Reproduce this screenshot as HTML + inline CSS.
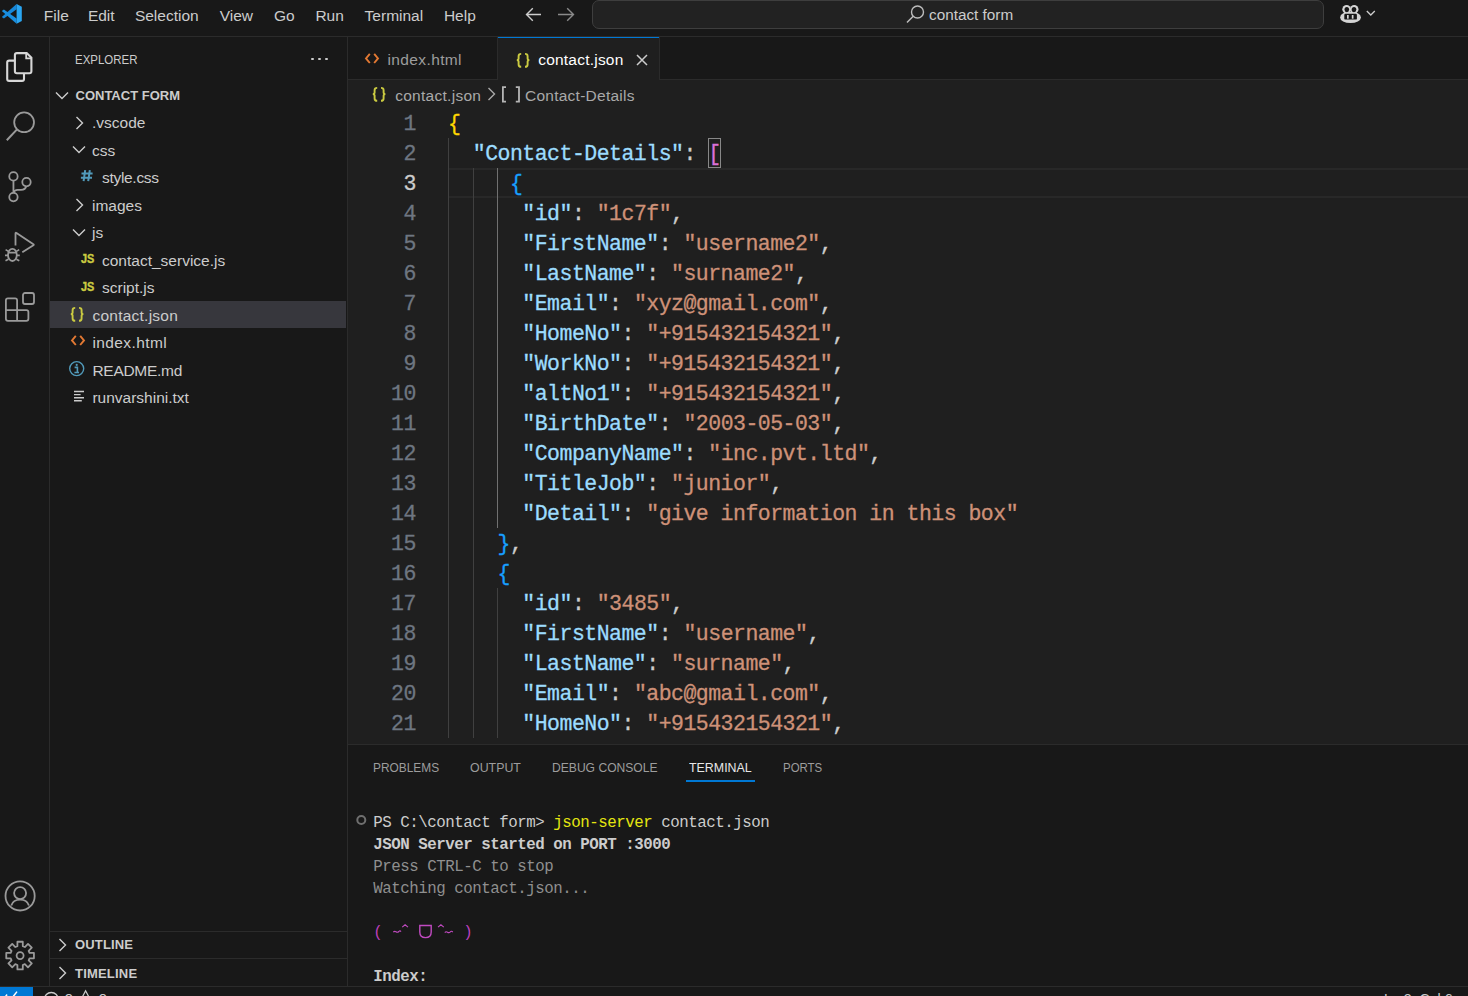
<!DOCTYPE html>
<html><head><meta charset="utf-8"><style>
*{margin:0;padding:0;box-sizing:border-box}
html,body{width:1468px;height:996px;overflow:hidden;background:#181818;font-family:"Liberation Sans",sans-serif;color:#cccccc}
.a{position:absolute}
.t{position:absolute;font-family:"Liberation Sans",sans-serif;white-space:pre;line-height:1}
.m{position:absolute;font-family:"Liberation Mono",monospace;white-space:pre;line-height:1;-webkit-text-stroke-width:0.3px}
svg{position:absolute;overflow:visible}
</style></head><body>
<div class="a" style="left:0px;top:0px;width:1468px;height:36px;background:#181818;"></div>
<div class="a" style="left:0px;top:36px;width:1468px;height:1px;background:#2b2b2b;"></div>
<div class="a" style="left:49px;top:37px;width:1px;height:950px;background:#2b2b2b;"></div>
<div class="a" style="left:347px;top:37px;width:1px;height:950px;background:#2b2b2b;"></div>
<div class="a" style="left:348px;top:37px;width:1120px;height:42px;background:#181818;"></div>
<div class="a" style="left:348px;top:79px;width:1120px;height:1px;background:#2b2b2b;"></div>
<div class="a" style="left:348px;top:80px;width:1120px;height:664px;background:#1f1f1f;"></div>
<div class="a" style="left:348px;top:744px;width:1120px;height:1px;background:#2b2b2b;"></div>
<div class="a" style="left:0px;top:986px;width:1468px;height:1px;background:#2b2b2b;"></div>
<div class="a" style="left:0px;top:987px;width:33px;height:9px;background:#0078d4;"></div>
<svg style="left:0px;top:0px;" width="28" height="28" viewBox="0 0 28 28"><path d="M16.6 4.1 L16.6 9.3 L3.9 18.6 L1.8 16.9 Z" fill="#1687d9"/><path d="M1.8 11.1 L3.9 9.4 L16.6 18.4 L16.6 23.8 Z" fill="#1a8fe0"/><path d="M16.6 4.1 L21.8 6.75 L21.8 20.9 L16.6 23.8 Z" fill="#2aa6f2"/></svg>
<div class="t" style="left:43.80px;top:7.88px;font-size:15.5px;color:#cccccc;">File</div>
<div class="t" style="left:87.90px;top:7.88px;font-size:15.5px;color:#cccccc;">Edit</div>
<div class="t" style="left:134.90px;top:7.88px;font-size:15.5px;color:#cccccc;">Selection</div>
<div class="t" style="left:219.70px;top:7.88px;font-size:15.5px;color:#cccccc;">View</div>
<div class="t" style="left:273.90px;top:7.88px;font-size:15.5px;color:#cccccc;">Go</div>
<div class="t" style="left:315.40px;top:7.88px;font-size:15.5px;color:#cccccc;">Run</div>
<div class="t" style="left:364.60px;top:7.88px;font-size:15.5px;color:#cccccc;">Terminal</div>
<div class="t" style="left:443.90px;top:7.88px;font-size:15.5px;color:#cccccc;">Help</div>
<svg style="left:525px;top:7px;" width="18" height="15" viewBox="0 0 18 15"><path d="M1.5 7.5 H16 M7.8 1.2 L1.5 7.5 L7.8 13.8" stroke="#cccccc" stroke-width="1.4" fill="none"/></svg>
<svg style="left:557px;top:7px;" width="18" height="15" viewBox="0 0 18 15"><path d="M1 7.5 H16.5 M10.2 1.2 L16.5 7.5 L10.2 13.8" stroke="#8a8a8a" stroke-width="1.4" fill="none"/></svg>
<div class="a" style="left:592px;top:0px;width:732px;height:29px;background:#222222;border:1px solid #3e3e3e;border-radius:7px;"></div>
<svg style="left:906px;top:5px;" width="19" height="19" viewBox="0 0 19 19"><circle cx="11.5" cy="7" r="6" stroke="#bdbdbd" stroke-width="1.4" fill="none"/><path d="M7.2 11.3 L1 17.5" stroke="#bdbdbd" stroke-width="1.5"/></svg>
<div class="t" style="left:929.00px;top:7.05px;font-size:15.3px;color:#cccccc;">contact form</div>
<svg style="left:1335px;top:0px;" width="30" height="28" viewBox="0 0 30 28"><circle cx="11.6" cy="9.3" r="4.3" fill="#d4d4d4"/><circle cx="19.2" cy="9.3" r="4.3" fill="#d4d4d4"/><ellipse cx="15.5" cy="17.4" rx="10.4" ry="5.7" fill="#d4d4d4"/><ellipse cx="11.8" cy="9.6" rx="2.3" ry="2.6" fill="#181818"/><ellipse cx="19.0" cy="9.6" rx="2.3" ry="2.6" fill="#181818"/><rect x="9.3" y="13.8" width="12.6" height="5.8" rx="1.2" fill="#181818"/><rect x="12" y="15" width="1.7" height="3.7" fill="#d4d4d4"/><rect x="16.8" y="15" width="1.7" height="3.7" fill="#d4d4d4"/></svg>
<svg style="left:1366px;top:10px;" width="10" height="7" viewBox="0 0 10 7"><path d="M0.8 1 L4.8 5 L8.8 1" stroke="#cccccc" stroke-width="1.3" fill="none"/></svg>
<svg style="left:0px;top:45px;" width="40" height="45" viewBox="0 0 40 45"><path d="M16.9 8.1 H26.7 L31.4 12.8 V26.2 Q31.4 28.2 29.4 28.2 H16.9 Q14.9 28.2 14.9 26.2 V10.1 Q14.9 8.1 16.9 8.1 Z" stroke="#d7d7d7" stroke-width="2.1" fill="none"/><path d="M26.2 8.6 V13.3 H31" stroke="#d7d7d7" stroke-width="1.8" fill="none"/><path d="M14.9 15.6 H9.2 Q7.2 15.6 7.2 17.6 V33.9 Q7.2 35.9 9.2 35.9 H22 Q24 35.9 24 33.9 V28.2" stroke="#d7d7d7" stroke-width="2.1" fill="none"/></svg>
<svg style="left:0px;top:105px;" width="40" height="40" viewBox="0 0 40 40"><circle cx="24.1" cy="17.3" r="9.9" stroke="#9a9a9a" stroke-width="1.8" fill="none"/><path d="M17 24.4 L6.8 35.2" stroke="#9a9a9a" stroke-width="2"/></svg>
<svg style="left:0px;top:165px;" width="40" height="40" viewBox="0 0 40 40"><circle cx="13.45" cy="11.4" r="4.2" stroke="#9a9a9a" stroke-width="1.8" fill="none"/><circle cx="13.45" cy="32.1" r="4.2" stroke="#9a9a9a" stroke-width="1.8" fill="none"/><circle cx="26.5" cy="17.1" r="4.2" stroke="#9a9a9a" stroke-width="1.8" fill="none"/><path d="M13.45 15.6 V27.9 M26.2 21.3 Q25.5 24.8 21 24.9 H17.5 Q14.5 25 13.6 27.6" stroke="#9a9a9a" stroke-width="1.8" fill="none"/></svg>
<svg style="left:0px;top:225px;" width="40" height="40" viewBox="0 0 40 40"><path d="M15.5 20.5 V8.4 Q15.5 7.3 16.5 7.9 L33.4 19.2 Q34.2 19.7 33.4 20.2 L22.3 27.3" stroke="#9a9a9a" stroke-width="1.8" fill="none" stroke-linejoin="round"/><ellipse cx="12.4" cy="29.9" rx="4.4" ry="6.1" stroke="#9a9a9a" stroke-width="1.8" fill="none"/><path d="M8.2 27.6 H16.6 M5.6 24.6 L8.4 26.4 M5.0 30.4 H8 M5.5 35.8 L8.4 34.2 M19.2 24.6 L16.4 26.4 M19.8 30.4 H16.8 M19.3 35.8 L16.4 34.2" stroke="#9a9a9a" stroke-width="1.6"/></svg>
<svg style="left:0px;top:285px;" width="40" height="40" viewBox="0 0 40 40"><path d="M7.9 13.3 H15.1 Q17.1 13.3 17.1 15.3 V25.1 H26.4 Q28.4 25.1 28.4 27.1 V33.8 Q28.4 35.8 26.4 35.8 H7.9 Q5.9 35.8 5.9 33.8 V15.3 Q5.9 13.3 7.9 13.3 Z M5.9 25.1 H17.1 V35.8" stroke="#9a9a9a" stroke-width="1.8" fill="none" stroke-linejoin="round"/><rect x="23" y="8" width="11" height="11" rx="2" stroke="#9a9a9a" stroke-width="1.8" fill="none"/></svg>
<svg style="left:0px;top:875px;" width="40" height="40" viewBox="0 0 40 40"><circle cx="20.1" cy="20.9" r="14.6" stroke="#9a9a9a" stroke-width="1.8" fill="none"/><circle cx="20.1" cy="18.1" r="6" stroke="#9a9a9a" stroke-width="1.8" fill="none"/><path d="M11.3 30.5 Q13 24.6 20.1 24.6 Q27.2 24.6 28.9 30.5" stroke="#9a9a9a" stroke-width="1.8" fill="none"/></svg>
<svg style="left:0px;top:935px;" width="40" height="40" viewBox="0 0 40 40"><path d="M17.41 6.76 L22.79 6.76 L22.80 11.18 L24.85 12.03 L27.98 8.91 L31.79 12.72 L28.67 15.85 L29.52 17.90 L33.94 17.91 L33.94 23.29 L29.52 23.30 L28.67 25.35 L31.79 28.48 L27.98 32.29 L24.85 29.17 L22.80 30.02 L22.79 34.44 L17.41 34.44 L17.40 30.02 L15.35 29.17 L12.22 32.29 L8.41 28.48 L11.53 25.35 L10.68 23.30 L6.26 23.29 L6.26 17.91 L10.68 17.90 L11.53 15.85 L8.41 12.72 L12.22 8.91 L15.35 12.03 L17.40 11.18 Z" stroke="#9a9a9a" stroke-width="1.8" fill="none" stroke-linejoin="round"/><circle cx="20.1" cy="20.6" r="3.5" stroke="#9a9a9a" stroke-width="1.8" fill="none"/></svg>
<div class="t" style="left:74.50px;top:52.94px;font-size:13.3px;color:#cccccc;transform:scaleX(0.862);transform-origin:0 0;">EXPLORER</div>
<div class="a" style="left:311.3px;top:57.8px;width:2.4px;height:2.4px;background:#cccccc;border-radius:50%;"></div>
<div class="a" style="left:318.3px;top:57.8px;width:2.4px;height:2.4px;background:#cccccc;border-radius:50%;"></div>
<div class="a" style="left:325.3px;top:57.8px;width:2.4px;height:2.4px;background:#cccccc;border-radius:50%;"></div>
<svg style="left:55px;top:90.5px;" width="14" height="9" viewBox="0 0 14 9"><path d="M1 1.5 L7 7.5 L13 1.5" stroke="#cccccc" stroke-width="1.4" fill="none"/></svg>
<div class="t" style="left:75.50px;top:88.79px;font-size:13px;color:#cccccc;font-weight:bold;">CONTACT FORM</div>
<div class="a" style="left:50px;top:301px;width:296px;height:27px;background:#37373d;"></div>
<svg style="left:75px;top:115.5px;" width="9" height="14" viewBox="0 0 9 14"><path d="M1.5 1 L7.5 7 L1.5 13" stroke="#cccccc" stroke-width="1.4" fill="none"/></svg>
<div class="t" style="left:92.00px;top:115.08px;font-size:15.5px;color:#cccccc;">.vscode</div>
<svg style="left:71.5px;top:145.0px;" width="14" height="9" viewBox="0 0 14 9"><path d="M1 1.5 L7 7.5 L13 1.5" stroke="#cccccc" stroke-width="1.4" fill="none"/></svg>
<div class="t" style="left:92.00px;top:142.58px;font-size:15.5px;color:#cccccc;">css</div>
<svg style="left:80px;top:169.0px;" width="14" height="14" viewBox="0 0 14 14"><path d="M5.2 1.2 L3.6 12.2 M9.8 1.2 L8.2 12.2 M1.5 4.6 H12.6 M0.9 8.8 H12" stroke="#519aba" stroke-width="2" fill="none"/></svg>
<div class="t" style="left:102.00px;top:170.08px;font-size:15.5px;color:#cccccc;letter-spacing:-0.3px;">style.css</div>
<svg style="left:75px;top:198.0px;" width="9" height="14" viewBox="0 0 9 14"><path d="M1.5 1 L7.5 7 L1.5 13" stroke="#cccccc" stroke-width="1.4" fill="none"/></svg>
<div class="t" style="left:92.00px;top:197.58px;font-size:15.5px;color:#cccccc;">images</div>
<svg style="left:71.5px;top:227.5px;" width="14" height="9" viewBox="0 0 14 9"><path d="M1 1.5 L7 7.5 L13 1.5" stroke="#cccccc" stroke-width="1.4" fill="none"/></svg>
<div class="t" style="left:92.00px;top:225.08px;font-size:15.5px;color:#cccccc;">js</div>
<div class="t" style="left:80.80px;top:252.39px;font-size:13.6px;color:#cbcb41;font-weight:bold;transform:scaleX(0.8);transform-origin:0 0;-webkit-text-stroke:0.4px #cbcb41;">JS</div>
<div class="t" style="left:102.00px;top:252.58px;font-size:15.5px;color:#cccccc;">contact_service.js</div>
<div class="t" style="left:80.80px;top:279.89px;font-size:13.6px;color:#cbcb41;font-weight:bold;transform:scaleX(0.8);transform-origin:0 0;-webkit-text-stroke:0.4px #cbcb41;">JS</div>
<div class="t" style="left:102.00px;top:280.08px;font-size:15.5px;color:#cccccc;">script.js</div>
<svg style="left:70px;top:307.0px;" width="15" height="15" viewBox="0 0 15 15"><path d="M5.2 0.9 Q2.6 0.9 2.6 3.2 V5.6 Q2.6 7.1 0.8 7.1 Q2.6 7.1 2.6 8.6 V11.4 Q2.6 13.8 5.2 13.8 M9.0 0.9 Q11.6 0.9 11.6 3.2 V5.6 Q11.6 7.1 13.4 7.1 Q11.6 7.1 11.6 8.6 V11.4 Q11.6 13.8 9.0 13.8" stroke="#cbcb41" stroke-width="1.9" fill="none"/></svg>
<div class="t" style="left:92.40px;top:307.58px;font-size:15.5px;color:#cccccc;letter-spacing:0.25px;">contact.json</div>
<svg style="left:70.5px;top:335.0px;" width="14" height="11" viewBox="0 0 14 11"><path d="M4.8 0.8 L1 5.4 L4.8 10 M9.2 0.8 L13 5.4 L9.2 10" stroke="#e37933" stroke-width="1.9" fill="none"/></svg>
<div class="t" style="left:92.40px;top:335.08px;font-size:15.5px;color:#cccccc;letter-spacing:0.4px;">index.html</div>
<svg style="left:68px;top:360.2px;" width="18" height="18" viewBox="0 0 18 18"><circle cx="8.7" cy="8.6" r="7" stroke="#519aba" stroke-width="1.4" fill="none"/><circle cx="8.7" cy="4.9" r="1.1" fill="#519aba"/><path d="M6.6 7.4 H9.4 V12.3 M6.4 12.5 H11" stroke="#519aba" stroke-width="1.6" fill="none"/></svg>
<div class="t" style="left:92.40px;top:362.58px;font-size:15.5px;color:#cccccc;letter-spacing:-0.27px;">README.md</div>
<svg style="left:74px;top:389.5px;" width="12" height="14" viewBox="0 0 12 14"><path d="M0 1.5 H10 M0 4.6 H6.6 M0 7.7 H10 M0 10.8 H7.8" stroke="#cccccc" stroke-width="1.4"/></svg>
<div class="t" style="left:92.40px;top:390.08px;font-size:15.5px;color:#cccccc;">runvarshini.txt</div>
<div class="a" style="left:50px;top:931px;width:297px;height:1px;background:#2b2b2b;"></div>
<div class="a" style="left:50px;top:958px;width:297px;height:1px;background:#2b2b2b;"></div>
<svg style="left:58px;top:938px;" width="9" height="14" viewBox="0 0 9 14"><path d="M1.5 1 L7.5 7 L1.5 13" stroke="#cccccc" stroke-width="1.4" fill="none"/></svg>
<div class="t" style="left:75.00px;top:938.19px;font-size:13px;color:#cccccc;font-weight:bold;letter-spacing:0.15px;">OUTLINE</div>
<svg style="left:58px;top:966px;" width="9" height="14" viewBox="0 0 9 14"><path d="M1.5 1 L7.5 7 L1.5 13" stroke="#cccccc" stroke-width="1.4" fill="none"/></svg>
<div class="t" style="left:75.00px;top:966.59px;font-size:13px;color:#cccccc;font-weight:bold;letter-spacing:0.2px;">TIMELINE</div>
<div class="a" style="left:348px;top:37px;width:150px;height:42px;background:#181818;"></div>
<div class="a" style="left:497px;top:37px;width:1px;height:42px;background:#2b2b2b;"></div>
<div class="a" style="left:498px;top:37px;width:161px;height:43px;background:#1f1f1f;"></div>
<div class="a" style="left:498px;top:37px;width:161px;height:1px;background:#0078d4;"></div>
<div class="a" style="left:659px;top:37px;width:1px;height:42px;background:#2b2b2b;"></div>
<svg style="left:365.3px;top:53.2px;" width="14" height="11" viewBox="0 0 14 11"><path d="M4.8 0.8 L1 5.4 L4.8 10 M9.2 0.8 L13 5.4 L9.2 10" stroke="#e37933" stroke-width="1.9" fill="none"/></svg>
<div class="t" style="left:387.50px;top:51.88px;font-size:15.5px;color:#9d9d9d;letter-spacing:0.38px;">index.html</div>
<svg style="left:515.5px;top:52.5px;" width="15" height="15" viewBox="0 0 15 15"><path d="M5.2 0.9 Q2.6 0.9 2.6 3.2 V5.6 Q2.6 7.1 0.8 7.1 Q2.6 7.1 2.6 8.6 V11.4 Q2.6 13.8 5.2 13.8 M9.0 0.9 Q11.6 0.9 11.6 3.2 V5.6 Q11.6 7.1 13.4 7.1 Q11.6 7.1 11.6 8.6 V11.4 Q11.6 13.8 9.0 13.8" stroke="#cbcb41" stroke-width="1.9" fill="none"/></svg>
<div class="t" style="left:538.20px;top:51.88px;font-size:15.5px;color:#ffffff;letter-spacing:0.22px;">contact.json</div>
<svg style="left:636px;top:54px;" width="12" height="12" viewBox="0 0 12 12"><path d="M1 1 L11 11 M11 1 L1 11" stroke="#cccccc" stroke-width="1.5"/></svg>
<svg style="left:372px;top:86.5px;" width="15" height="15" viewBox="0 0 15 15"><path d="M5.2 0.9 Q2.6 0.9 2.6 3.2 V5.6 Q2.6 7.1 0.8 7.1 Q2.6 7.1 2.6 8.6 V11.4 Q2.6 13.8 5.2 13.8 M9.0 0.9 Q11.6 0.9 11.6 3.2 V5.6 Q11.6 7.1 13.4 7.1 Q11.6 7.1 11.6 8.6 V11.4 Q11.6 13.8 9.0 13.8" stroke="#cbcb41" stroke-width="1.9" fill="none"/></svg>
<div class="t" style="left:395.20px;top:87.88px;font-size:15.5px;color:#a9a9a9;letter-spacing:0.28px;">contact.json</div>
<svg style="left:486.5px;top:87.2px;" width="9" height="14" viewBox="0 0 9 14"><path d="M1.5 1 L7.5 7 L1.5 13" stroke="#a9a9a9" stroke-width="1.4" fill="none"/></svg>
<svg style="left:501px;top:86px;" width="20" height="17" viewBox="0 0 20 17"><path d="M5 1.2 H1.9 V15.6 H5 M14.8 1.2 H18 V15.6 H14.8" stroke="#b5b5b5" stroke-width="1.8" fill="none"/></svg>
<div class="t" style="left:525.00px;top:87.88px;font-size:15.5px;color:#a9a9a9;letter-spacing:0.25px;">Contact-Details</div>
<div class="a" style="left:449px;top:168px;width:1019px;height:30px;background:transparent;border-top:2px solid #282828;border-bottom:2px solid #282828;"></div>
<div class="a" style="left:448px;top:138px;width:1px;height:600px;background:#404040;"></div>
<div class="a" style="left:473px;top:168px;width:1px;height:570px;background:#404040;"></div>
<div class="a" style="left:497px;top:168px;width:1px;height:360px;background:#707070;"></div>
<div class="a" style="left:497px;top:588px;width:1px;height:150px;background:#404040;"></div>
<div class="m" style="left:403.41px;top:113.53px;font-size:21.5px;color:#6e7681;letter-spacing:-0.51px;">1</div>
<div class="m" style="left:448.00px;top:113.53px;font-size:21.5px;color:#cccccc;letter-spacing:-0.51px;"><span style="color:#ffd700">{</span></div>
<div class="m" style="left:403.41px;top:143.53px;font-size:21.5px;color:#6e7681;letter-spacing:-0.51px;">2</div>
<div class="m" style="left:472.78px;top:143.53px;font-size:21.5px;color:#cccccc;letter-spacing:-0.51px;"><span style="color:#9cdcfe">"Contact-Details"</span><span style="color:#cccccc">: </span><span style="color:#da70d6">[</span></div>
<div class="m" style="left:403.41px;top:173.53px;font-size:21.5px;color:#cccccc;letter-spacing:-0.51px;">3</div>
<div class="m" style="left:509.95px;top:173.53px;font-size:21.5px;color:#cccccc;letter-spacing:-0.51px;"><span style="color:#179fff">{</span></div>
<div class="m" style="left:403.41px;top:203.53px;font-size:21.5px;color:#6e7681;letter-spacing:-0.51px;">4</div>
<div class="m" style="left:522.34px;top:203.53px;font-size:21.5px;color:#cccccc;letter-spacing:-0.51px;"><span style="color:#9cdcfe">"id"</span><span style="color:#cccccc">: </span><span style="color:#ce9178">"1c7f"</span><span style="color:#cccccc">,</span></div>
<div class="m" style="left:403.41px;top:233.53px;font-size:21.5px;color:#6e7681;letter-spacing:-0.51px;">5</div>
<div class="m" style="left:522.34px;top:233.53px;font-size:21.5px;color:#cccccc;letter-spacing:-0.51px;"><span style="color:#9cdcfe">"FirstName"</span><span style="color:#cccccc">: </span><span style="color:#ce9178">"username2"</span><span style="color:#cccccc">,</span></div>
<div class="m" style="left:403.41px;top:263.53px;font-size:21.5px;color:#6e7681;letter-spacing:-0.51px;">6</div>
<div class="m" style="left:522.34px;top:263.53px;font-size:21.5px;color:#cccccc;letter-spacing:-0.51px;"><span style="color:#9cdcfe">"LastName"</span><span style="color:#cccccc">: </span><span style="color:#ce9178">"surname2"</span><span style="color:#cccccc">,</span></div>
<div class="m" style="left:403.41px;top:293.53px;font-size:21.5px;color:#6e7681;letter-spacing:-0.51px;">7</div>
<div class="m" style="left:522.34px;top:293.53px;font-size:21.5px;color:#cccccc;letter-spacing:-0.51px;"><span style="color:#9cdcfe">"Email"</span><span style="color:#cccccc">: </span><span style="color:#ce9178">"xyz@gmail.com"</span><span style="color:#cccccc">,</span></div>
<div class="m" style="left:403.41px;top:323.53px;font-size:21.5px;color:#6e7681;letter-spacing:-0.51px;">8</div>
<div class="m" style="left:522.34px;top:323.53px;font-size:21.5px;color:#cccccc;letter-spacing:-0.51px;"><span style="color:#9cdcfe">"HomeNo"</span><span style="color:#cccccc">: </span><span style="color:#ce9178">"+915432154321"</span><span style="color:#cccccc">,</span></div>
<div class="m" style="left:403.41px;top:353.53px;font-size:21.5px;color:#6e7681;letter-spacing:-0.51px;">9</div>
<div class="m" style="left:522.34px;top:353.53px;font-size:21.5px;color:#cccccc;letter-spacing:-0.51px;"><span style="color:#9cdcfe">"WorkNo"</span><span style="color:#cccccc">: </span><span style="color:#ce9178">"+915432154321"</span><span style="color:#cccccc">,</span></div>
<div class="m" style="left:391.02px;top:383.53px;font-size:21.5px;color:#6e7681;letter-spacing:-0.51px;">10</div>
<div class="m" style="left:522.34px;top:383.53px;font-size:21.5px;color:#cccccc;letter-spacing:-0.51px;"><span style="color:#9cdcfe">"altNo1"</span><span style="color:#cccccc">: </span><span style="color:#ce9178">"+915432154321"</span><span style="color:#cccccc">,</span></div>
<div class="m" style="left:391.02px;top:413.53px;font-size:21.5px;color:#6e7681;letter-spacing:-0.51px;">11</div>
<div class="m" style="left:522.34px;top:413.53px;font-size:21.5px;color:#cccccc;letter-spacing:-0.51px;"><span style="color:#9cdcfe">"BirthDate"</span><span style="color:#cccccc">: </span><span style="color:#ce9178">"2003-05-03"</span><span style="color:#cccccc">,</span></div>
<div class="m" style="left:391.02px;top:443.53px;font-size:21.5px;color:#6e7681;letter-spacing:-0.51px;">12</div>
<div class="m" style="left:522.34px;top:443.53px;font-size:21.5px;color:#cccccc;letter-spacing:-0.51px;"><span style="color:#9cdcfe">"CompanyName"</span><span style="color:#cccccc">: </span><span style="color:#ce9178">"inc.pvt.ltd"</span><span style="color:#cccccc">,</span></div>
<div class="m" style="left:391.02px;top:473.53px;font-size:21.5px;color:#6e7681;letter-spacing:-0.51px;">13</div>
<div class="m" style="left:522.34px;top:473.53px;font-size:21.5px;color:#cccccc;letter-spacing:-0.51px;"><span style="color:#9cdcfe">"TitleJob"</span><span style="color:#cccccc">: </span><span style="color:#ce9178">"junior"</span><span style="color:#cccccc">,</span></div>
<div class="m" style="left:391.02px;top:503.53px;font-size:21.5px;color:#6e7681;letter-spacing:-0.51px;">14</div>
<div class="m" style="left:522.34px;top:503.53px;font-size:21.5px;color:#cccccc;letter-spacing:-0.51px;"><span style="color:#9cdcfe">"Detail"</span><span style="color:#cccccc">: </span><span style="color:#ce9178">"give information in this box"</span></div>
<div class="m" style="left:391.02px;top:533.53px;font-size:21.5px;color:#6e7681;letter-spacing:-0.51px;">15</div>
<div class="m" style="left:497.56px;top:533.53px;font-size:21.5px;color:#cccccc;letter-spacing:-0.51px;"><span style="color:#179fff">}</span><span style="color:#cccccc">,</span></div>
<div class="m" style="left:391.02px;top:563.53px;font-size:21.5px;color:#6e7681;letter-spacing:-0.51px;">16</div>
<div class="m" style="left:497.56px;top:563.53px;font-size:21.5px;color:#cccccc;letter-spacing:-0.51px;"><span style="color:#179fff">{</span></div>
<div class="m" style="left:391.02px;top:593.53px;font-size:21.5px;color:#6e7681;letter-spacing:-0.51px;">17</div>
<div class="m" style="left:522.34px;top:593.53px;font-size:21.5px;color:#cccccc;letter-spacing:-0.51px;"><span style="color:#9cdcfe">"id"</span><span style="color:#cccccc">: </span><span style="color:#ce9178">"3485"</span><span style="color:#cccccc">,</span></div>
<div class="m" style="left:391.02px;top:623.53px;font-size:21.5px;color:#6e7681;letter-spacing:-0.51px;">18</div>
<div class="m" style="left:522.34px;top:623.53px;font-size:21.5px;color:#cccccc;letter-spacing:-0.51px;"><span style="color:#9cdcfe">"FirstName"</span><span style="color:#cccccc">: </span><span style="color:#ce9178">"username"</span><span style="color:#cccccc">,</span></div>
<div class="m" style="left:391.02px;top:653.53px;font-size:21.5px;color:#6e7681;letter-spacing:-0.51px;">19</div>
<div class="m" style="left:522.34px;top:653.53px;font-size:21.5px;color:#cccccc;letter-spacing:-0.51px;"><span style="color:#9cdcfe">"LastName"</span><span style="color:#cccccc">: </span><span style="color:#ce9178">"surname"</span><span style="color:#cccccc">,</span></div>
<div class="m" style="left:391.02px;top:683.53px;font-size:21.5px;color:#6e7681;letter-spacing:-0.51px;">20</div>
<div class="m" style="left:522.34px;top:683.53px;font-size:21.5px;color:#cccccc;letter-spacing:-0.51px;"><span style="color:#9cdcfe">"Email"</span><span style="color:#cccccc">: </span><span style="color:#ce9178">"abc@gmail.com"</span><span style="color:#cccccc">,</span></div>
<div class="m" style="left:391.02px;top:713.53px;font-size:21.5px;color:#6e7681;letter-spacing:-0.51px;">21</div>
<div class="m" style="left:522.34px;top:713.53px;font-size:21.5px;color:#cccccc;letter-spacing:-0.51px;"><span style="color:#9cdcfe">"HomeNo"</span><span style="color:#cccccc">: </span><span style="color:#ce9178">"+915432154321"</span><span style="color:#cccccc">,</span></div>
<div class="a" style="left:708.19px;top:138px;width:13px;height:30px;background:transparent;border:1px solid #888888;"></div>
<div class="t" style="left:373.00px;top:761.04px;font-size:13.3px;color:#9d9d9d;transform:scaleX(0.894);transform-origin:0 0;">PROBLEMS</div>
<div class="t" style="left:469.70px;top:761.04px;font-size:13.3px;color:#9d9d9d;transform:scaleX(0.931);transform-origin:0 0;">OUTPUT</div>
<div class="t" style="left:551.70px;top:761.04px;font-size:13.3px;color:#9d9d9d;transform:scaleX(0.91);transform-origin:0 0;">DEBUG CONSOLE</div>
<div class="t" style="left:688.60px;top:761.04px;font-size:13.3px;color:#e7e7e7;transform:scaleX(0.933);transform-origin:0 0;">TERMINAL</div>
<div class="t" style="left:782.60px;top:761.04px;font-size:13.3px;color:#9d9d9d;transform:scaleX(0.86);transform-origin:0 0;">PORTS</div>
<div class="a" style="left:686px;top:780px;width:69px;height:1.5px;background:#0078d4;"></div>
<svg style="left:356px;top:815px;" width="11" height="11" viewBox="0 0 11 11"><circle cx="5.3" cy="5" r="4" stroke="#6f6f6f" stroke-width="2" fill="none"/></svg>
<div class="m" style="left:373.30px;top:816.20px;font-size:15.8px;color:#cccccc;letter-spacing:-0.48px;-webkit-text-stroke-width:0;">PS C:\contact form&gt; <span style="color:#e5e510">json-server</span> contact.json</div>
<div class="m" style="left:373.30px;top:838.20px;font-size:15.8px;color:#cccccc;font-weight:bold;letter-spacing:-0.48px;-webkit-text-stroke-width:0;">JSON Server started on PORT :3000</div>
<div class="m" style="left:373.30px;top:860.20px;font-size:15.8px;color:#cccccc;letter-spacing:-0.48px;-webkit-text-stroke-width:0;"><span style="color:#8f8f8f">Press CTRL-C to stop</span></div>
<div class="m" style="left:373.30px;top:882.20px;font-size:15.8px;color:#cccccc;letter-spacing:-0.48px;-webkit-text-stroke-width:0;"><span style="color:#8f8f8f">Watching contact.json...</span></div>
<div class="m" style="left:373.30px;top:926.20px;font-size:15.8px;color:#cccccc;letter-spacing:-0.48px;-webkit-text-stroke-width:0;"><span style="color:#bc3fbc">(         )</span></div>
<svg style="left:368px;top:915px;" width="110" height="35" viewBox="0 0 110 35"><path d="M25.3 17.2 Q26.5 15.8 28 16.8 Q29.5 17.8 30.8 16.5 Q32 15.2 33 16.6" stroke="#c04ac0" stroke-width="1.1" fill="none"/><path d="M34.2 12.2 L37.1 9.8 L40 12.2" stroke="#c04ac0" stroke-width="1.1" fill="none"/><path d="M51.8 10.5 H63.2 V17 Q63.2 22.6 57.5 22.6 Q51.8 22.6 51.8 17 Z" stroke="#c04ac0" stroke-width="1.4" fill="none"/><path d="M70 12.2 L72.9 9.8 L75.8 12.2" stroke="#c04ac0" stroke-width="1.1" fill="none"/><path d="M76.8 17.6 Q78 16.2 79.5 17.2 Q81 18.2 82.3 16.9 Q83.5 15.6 84.8 17.2" stroke="#c04ac0" stroke-width="1.1" fill="none"/></svg>
<div class="m" style="left:373.30px;top:970.20px;font-size:15.8px;color:#cccccc;font-weight:bold;letter-spacing:-0.48px;-webkit-text-stroke-width:0;">Index:</div>
<svg style="left:0px;top:987px;" width="33" height="9" viewBox="0 0 33 9"><path d="M12.4 10.5 L17 4.6" stroke="#ffffff" stroke-width="1.5" fill="none"/><path d="M5.6 9 L7.2 7.6" stroke="#ffffff" stroke-width="1.4" fill="none"/></svg>
<svg style="left:43px;top:990.5px;" width="16" height="16" viewBox="0 0 16 16"><circle cx="8.3" cy="8.5" r="7" stroke="#cccccc" stroke-width="1.3" fill="none"/></svg>
<div class="t" style="left:64.50px;top:990.68px;font-size:15.5px;color:#cccccc;">0</div>
<svg style="left:81px;top:990px;" width="10" height="8" viewBox="0 0 10 8"><path d="M0.8 8 L4.6 0.8 L8.4 8" stroke="#cccccc" stroke-width="1.3" fill="none"/></svg>
<div class="t" style="left:98.50px;top:990.88px;font-size:15.5px;color:#cccccc;">0</div>
<div class="t" style="left:1384.30px;top:991.08px;font-size:15.5px;color:#cccccc;transform:scaleX(0.915);transform-origin:0 0;">Ln 3, Col 6</div>
</body></html>
